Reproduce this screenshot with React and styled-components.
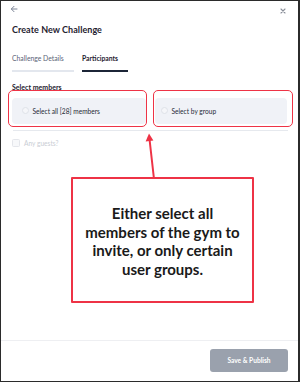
import React from 'react'
import styled, { createGlobalStyle } from 'styled-components'

const GlobalStyle = createGlobalStyle`
  html, body {
    margin: 0;
    padding: 0;
    background: #ffffff;
  }
  * {
    box-sizing: border-box;
  }
`

const Frame = styled.div`
  position: relative;
  width: 300px;
  height: 382px;
  border: 1px solid #2b2b2b;
  border-right-width: 2px;
  background: #ffffff;
  display: flex;
  flex-direction: column;
  font-family: Lato, 'Noto Sans', sans-serif;
  color: #1f2230;
  overflow: hidden;
`

const TopBar = styled.div`
  height: 16px;
  display: flex;
  align-items: center;
  justify-content: space-between;
  padding: 0 12px 0 9px;
`

const IconButton = styled.span`
  display: flex;
  align-items: center;
  color: ${(p) => p.color};
  margin-top: ${(p) => p.offset || 0}px;
`

const Title = styled.h1`
  margin: 6px 0 0 11px;
  font-size: 9px;
  line-height: 13px;
  font-weight: 700;
  letter-spacing: 0.05px;
`

const Tabs = styled.div`
  display: flex;
  gap: 8px;
  margin: 17px 0 0 11px;
`

const Tab = styled.div`
  width: ${(p) => p.width}px;
  font-size: 6.8px;
  line-height: 10px;
  font-weight: ${(p) => (p.active ? 700 : 400)};
  color: ${(p) => (p.active ? '#1f2230' : '#5b6478')};
  padding-bottom: 7px;
  border-bottom: 2px solid ${(p) => (p.active ? '#1c2537' : '#e3e7ee')};
`

const Section = styled.div`
  padding: 0 10px 0 11px;
`

const Label = styled.div`
  margin-top: 10px;
  font-size: 7px;
  line-height: 10px;
  font-weight: 700;
`

const Options = styled.div`
  display: grid;
  grid-template-columns: 139px 140px;
  gap: 6px;
  margin-left: -4px;
  margin-top: -2px;
`

const Highlight = styled.div`
  border: 1.5px solid #ee3346;
  border-radius: 5px;
  padding: ${(p) => p.pad};
`

const Option = styled.div`
  height: 26px;
  border-radius: 4px;
  background: #f0f2f7;
  display: flex;
  align-items: center;
  gap: 4px;
  padding-left: ${(p) => p.indent}px;
  font-size: 6.6px;
  color: #262a36;
`

const Radio = styled.span`
  width: 7px;
  height: 7px;
  border-radius: 50%;
  border: 0.8px solid #dfe2e8;
  background: #f5f6f9;
`

const Divider = styled.div`
  height: 1px;
  background: #e6e9ee;
  margin: 3px 0 0 1px;
`

const CheckRow = styled.label`
  display: flex;
  align-items: center;
  gap: 4px;
  margin-top: 8px;
  font-size: 6.6px;
  color: #c9cdd4;
`

const Box = styled.span`
  width: 8px;
  height: 8px;
  border-radius: 1.5px;
  border: 0.8px solid #e4e6eb;
  background: #f7f8fa;
`

const Footer = styled.div`
  margin-top: auto;
  border-top: 1px solid #eeeff2;
  height: 41px;
  display: flex;
  align-items: center;
  justify-content: flex-end;
  padding: 0 10px 2px 0;
`

const PrimaryButton = styled.button`
  width: 78px;
  height: 23px;
  border: none;
  border-radius: 3px;
  background: #9aa1ad;
  color: #ffffff;
  font-family: Lato, 'Noto Sans', sans-serif;
  font-size: 6.6px;
  font-weight: 700;
  cursor: pointer;
`

const Arrow = styled.svg`
  position: absolute;
  left: 140px;
  top: 128px;
  pointer-events: none;
`

const Callout = styled.div`
  position: absolute;
  left: 70px;
  top: 176px;
  width: 183px;
  height: 126px;
  border: 2px solid #ee3346;
  border-radius: 1px;
  background: #ffffff;
  display: flex;
  align-items: center;
  justify-content: center;
  text-align: center;
  padding: 2px 8px 0;
  font-family: Lato, 'Noto Sans', sans-serif;
  font-size: 15px;
  line-height: 18.5px;
  font-weight: 700;
  color: #1a1a1a;
`

const BackIcon = () => (
  <svg width="8" height="8" viewBox="0 0 8 8" fill="none">
    <path d="M7 4H1.5M4 1.3L1.3 4 4 6.7" stroke="currentColor" strokeWidth="1" strokeLinecap="round" strokeLinejoin="round" />
  </svg>
)

const CloseIcon = () => (
  <svg width="6" height="6" viewBox="0 0 6 6" fill="none">
    <path d="M1 1L5 5M5 1L1 5" stroke="currentColor" strokeWidth="1.1" strokeLinecap="round" />
  </svg>
)

export default function App() {
  return (
    <>
      <GlobalStyle />
      <Frame>
        <TopBar>
          <IconButton color="#7d8597"><BackIcon /></IconButton>
          <IconButton color="#8a8f99" offset={4}><CloseIcon /></IconButton>
        </TopBar>
        <Title>Create New Challenge</Title>
        <Tabs>
          <Tab width={62}>Challenge Details</Tab>
          <Tab width={46} active>Participants</Tab>
        </Tabs>
        <Section>
          <Label>Select members</Label>
          <Options>
            <Highlight pad="6.5px 0.5px 2px 2.5px">
              <Option indent={10}>
                <Radio />
                Select all [28] members
              </Option>
            </Highlight>
            <Highlight pad="6.5px 5px 2px 0.5px">
              <Option indent={6}>
                <Radio />
                Select by group
              </Option>
            </Highlight>
          </Options>
          <Divider />
          <CheckRow>
            <Box />
            Any guests?
          </CheckRow>
        </Section>
        <Footer>
          <PrimaryButton>Save &amp; Publish</PrimaryButton>
        </Footer>

        <Arrow width="20" height="52" viewBox="0 0 20 52">
          <path d="M13 50L8.6 11" stroke="#ee3346" strokeWidth="2" strokeLinecap="round" />
          <path d="M8 4.5L4.6 12.4L12.4 11.6Z" fill="#ee3346" />
        </Arrow>
        <Callout>
          Either select all members of the gym to invite, or only certain user groups.
        </Callout>
      </Frame>
    </>
  )
}
